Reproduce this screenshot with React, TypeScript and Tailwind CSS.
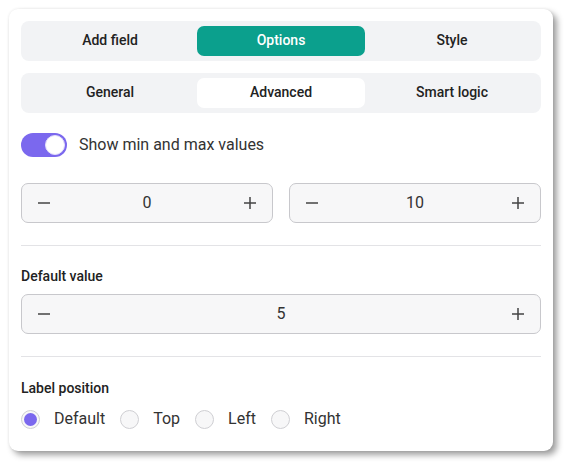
import React from "react";

function Stepper({ value }: { value: string }) {
  return (
    <div className="flex h-[40px] flex-1 items-center justify-between rounded-[7px] border border-[#c8c8cc] bg-[#f7f7f8] px-[15px] text-[#333]">
      <svg width="14" height="14" viewBox="0 0 14 14"><path d="M1 7h12" stroke="#444" strokeWidth="1.5" /></svg>
      <span className="text-[16px]">{value}</span>
      <svg width="14" height="14" viewBox="0 0 14 14"><path d="M1 7h12M7 1v12" stroke="#444" strokeWidth="1.5" /></svg>
    </div>
  );
}

function Tabs({ items, active, activeCls }: { items: string[]; active: number; activeCls: string }) {
  return (
    <div className="flex h-[40px] gap-[3px] rounded-[8px] bg-[#f2f3f5] p-[5px]">
      {items.map((t, i) => (
        <div
          key={t}
          className={`flex flex-1 items-center justify-center rounded-[7px] pb-[1px] text-[14px] font-medium ${i === active ? activeCls : "text-[#222]"}`}
        >
          {t}
        </div>
      ))}
    </div>
  );
}

function Radio({ label, checked }: { label: string; checked?: boolean }) {
  return (
    <div className="flex items-center gap-[14px]">
      <div className="flex h-[19px] w-[19px] items-center justify-center rounded-full border border-[#cfcfd3] bg-[#f7f7f8]">
        {checked && <div className="h-[13px] w-[13px] rounded-full bg-[#7b68ee]" />}
      </div>
      <span className="text-[16px] text-[#333]">{label}</span>
    </div>
  );
}

export default function App() {
  return (
    <div className="h-[473px] w-[574px] bg-white pl-[9px] pt-[9px]" style={{ fontFamily: "Roboto, 'Noto Sans', sans-serif" }}>
      <div className="flex h-[442px] w-[544px] flex-col rounded-[9px] bg-white px-[12px] pt-[12px] shadow-[0_0_3px_rgba(0,0,0,0.08),4px_4px_6px_rgba(0,0,0,0.38)]">
        <Tabs items={["Add field", "Options", "Style"]} active={1} activeCls="bg-[#0ba08d] text-white" />
        <div className="mt-[12px]">
          <Tabs items={["General", "Advanced", "Smart logic"]} active={1} activeCls="bg-white text-[#222]" />
        </div>
        <div className="mt-[20px] flex items-center gap-[12px]">
          <div className="flex h-[24px] w-[46px] items-center justify-end rounded-full bg-[#7b68ee] pr-[2px]">
            <div className="h-[20px] w-[20px] rounded-full border border-[#e4e0fb] bg-white" />
          </div>
          <span className="text-[16px] text-[#333]">Show min and max values</span>
        </div>
        <div className="mt-[26px] flex gap-[16px]">
          <Stepper value="0" />
          <Stepper value="10" />
        </div>
        <div className="mt-[22px] h-px bg-[#e3e3e6]" />
        <div className="mt-[20px] text-[14px] leading-[20px] font-medium text-[#222]">Default value</div>
        <div className="mt-[8px] flex">
          <Stepper value="5" />
        </div>
        <div className="mt-[22px] h-px bg-[#e3e3e6]" />
        <div className="mt-[21px] text-[14px] leading-[20px] font-medium text-[#222]">Label position</div>
        <div className="mt-[9px] flex items-center gap-[15px]">
          <Radio label="Default" checked />
          <Radio label="Top" />
          <Radio label="Left" />
          <Radio label="Right" />
        </div>
      </div>
    </div>
  );
}
